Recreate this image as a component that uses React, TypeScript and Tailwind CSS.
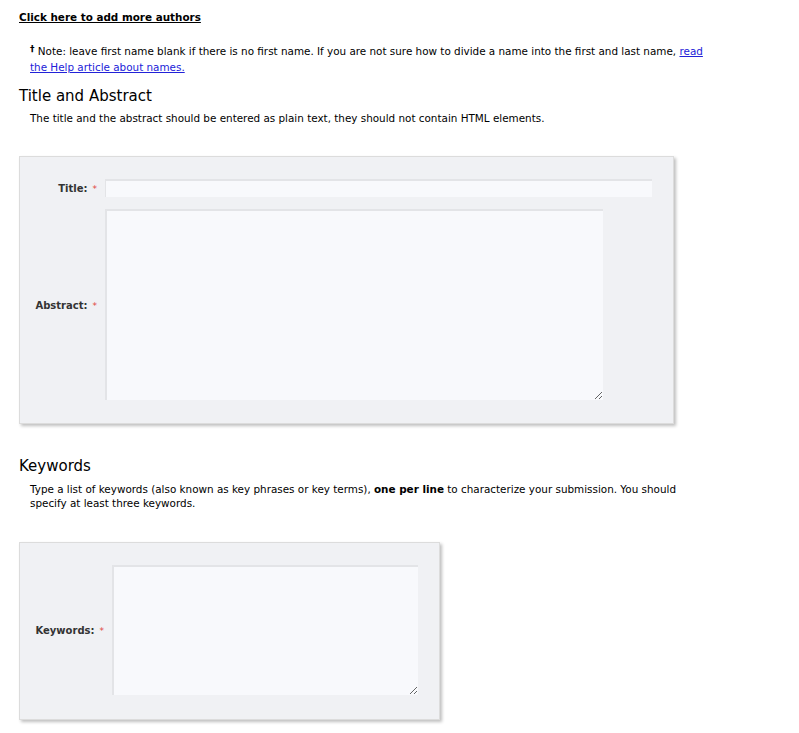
const font = { fontFamily: '"DejaVu Sans", Verdana, sans-serif' }

function Req() {
  return <span className="ml-[5px] text-[9px] font-normal text-[#e0463d]">*</span>
}

export default function App() {
  return (
    <div className="min-h-screen bg-white pl-[19px] pt-[9px] text-[10.4px] leading-4 text-black" style={font}>
      <a className="font-bold underline" href="#">
        Click here to add more authors
      </a>

      <p className="mt-[18px] w-[691px] pl-[11px]">
        <span className="relative -top-[3px] text-[9px] font-bold leading-none">†</span> Note: leave first name blank if
        there is no first name. If you are not sure how to divide a name into the first and last name,{' '}
        <a className="text-[#2222d8] underline" href="#">
          read the Help article about names.
        </a>
      </p>

      <h2 className="mt-[11px] text-[15px] leading-5">Title and Abstract</h2>
      <p className="mt-[4px] pl-[11px]">
        The title and the abstract should be entered as plain text, they should not contain HTML elements.
      </p>

      <div className="mt-[30px] w-[655px] border border-[#dcdcdc] bg-[#f0f1f4] pb-[23px] pt-[22px] shadow-[2px_2px_3px_rgba(0,0,0,0.25)]">
        <div className="grid grid-cols-[85px_1fr] items-center gap-y-[12px]">
          <label className="pr-[8px] pt-[2px] text-right text-[10px] font-bold text-[#333]">
            Title:
            <Req />
          </label>
          <input className="h-[18px] w-[547px] border-t-2 border-l border-[#e3e4e7] bg-[#f8f9fc] outline-none" />
          <label className="pr-[8px] pt-[2px] text-right text-[10px] font-bold text-[#333]">
            Abstract:
            <Req />
          </label>
          <textarea className="h-[191px] w-[498px] resize border-t-2 border-l-2 border-[#e3e4e7] bg-[#f8f9fc] outline-none" />
        </div>
      </div>

      <h2 className="mt-[32px] text-[15px] leading-5">Keywords</h2>
      <p className="mt-[6px] w-[691px] pl-[11px] leading-[14px]">
        Type a list of keywords (also known as key phrases or key terms), <b>one per line</b> to characterize your
        submission. You should specify at least three keywords.
      </p>

      <div className="mb-[20px] mt-[32px] w-[421px] border border-[#dcdcdc] bg-[#f0f1f4] pb-[24px] pt-[22px] shadow-[2px_2px_3px_rgba(0,0,0,0.25)]">
        <div className="grid grid-cols-[92px_1fr] items-center">
          <label className="pr-[8px] pt-[2px] text-right text-[10px] font-bold text-[#333]">
            Keywords:
            <Req />
          </label>
          <textarea className="h-[130px] w-[306px] resize border-t-2 border-l-2 border-[#e3e4e7] bg-[#f8f9fc] outline-none" />
        </div>
      </div>
    </div>
  )
}
